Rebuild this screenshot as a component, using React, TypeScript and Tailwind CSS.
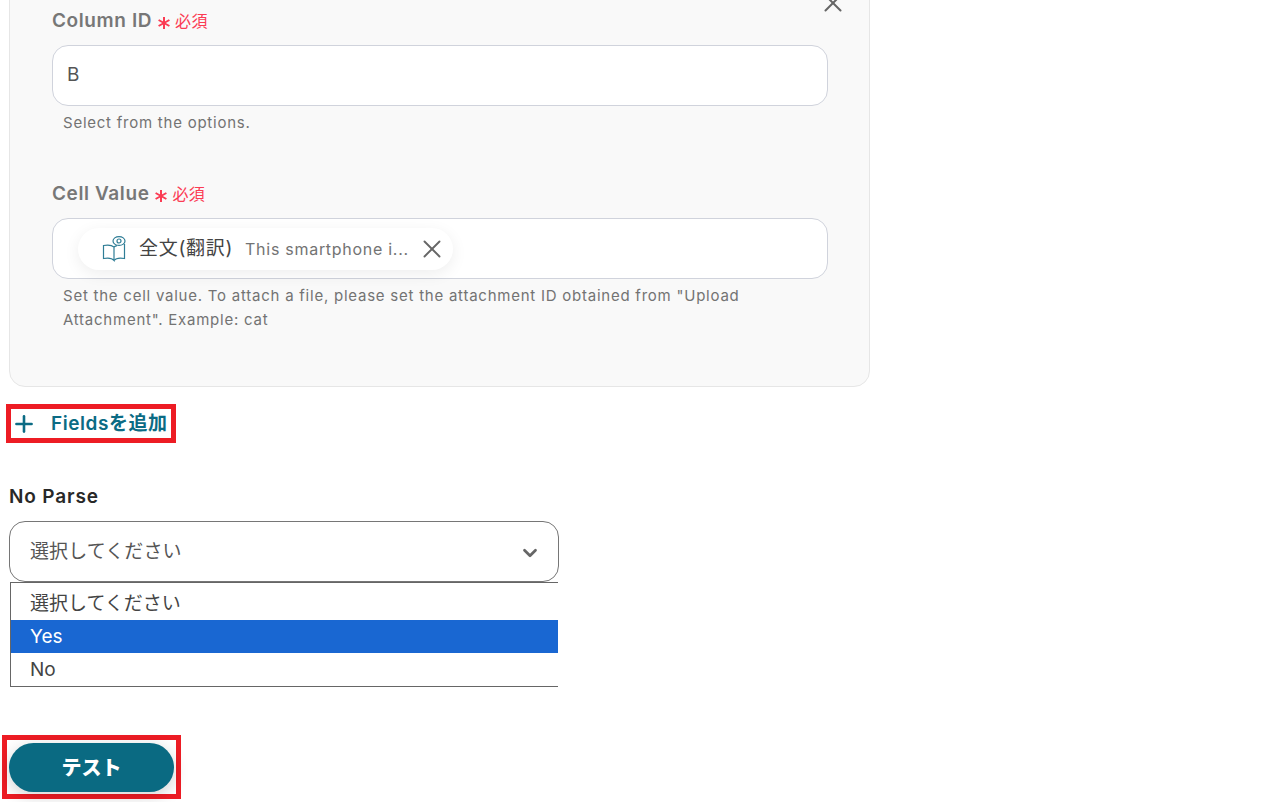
import { ChevronDown, Plus, X } from 'lucide-react'

const font = "font-['Inter','Noto_Sans_CJK_JP',sans-serif]"

function Required() {
  return (
    <span className="flex items-center text-[#fb3c54]">
      <svg width="14" height="14" viewBox="0 0 14 14" className="mt-[3px] ml-[5px]" fill="none" stroke="currentColor" strokeWidth="2">
        <path d="M7 1v12M1.6 4l10.8 6M12.4 4 1.6 10" />
      </svg>
      <span className="ml-[4px] text-[16px] leading-[22px] font-normal tracking-[0.4px]">必須</span>
    </span>
  )
}

function BookIcon() {
  return (
    <svg width="24" height="26" viewBox="0 0 24 26" fill="none" stroke="#2f7d96" strokeWidth="1.2">
      <path d="M12 11C10 9.3 6 8.6 1.5 9.5V22.5C6 21.6 10 22 12 24.5V11Z" />
      <path d="M12 11C13 10.2 14 9.8 15 9.6M22.5 8V22.5C18 21.6 14 22 12 24.5" />
      <ellipse cx="17" cy="5" rx="6" ry="4.4" />
      <circle cx="17" cy="5" r="2" />
    </svg>
  )
}

export default function App() {
  return (
    <div className={`${font} h-[802px] w-[1270px] overflow-hidden bg-white`}>
      <div className="relative mt-[-20px] ml-[9px] h-[407px] w-[861px] rounded-b-[16px] border border-[#e6e6e6] bg-[#f9f9f9] pt-[28px] pl-[42px]">
        <X className="absolute top-[7px] left-[808px] text-[#666]" size={30} strokeWidth={1.6} />

        <div className="flex h-[24px] items-center text-[19px] font-semibold tracking-[0.6px] text-[#777]">
          Column ID
          <Required />
        </div>
        <div className="mt-[12px] flex h-[61px] w-[776px] items-center rounded-[16px] border border-[#d0d3dc] bg-white px-[14px] text-[19px] text-[#555]">
          <span className="mt-[-1px]">B</span>
        </div>
        <p className="mt-[5px] ml-[11px] text-[15px] leading-[24px] tracking-[0.76px] text-[#737373]">Select from the options.</p>

        <div className="mt-[47px] flex h-[24px] items-center text-[19px] font-semibold tracking-[0.6px] text-[#777]">
          Cell Value
          <Required />
        </div>
        <div className="mt-[12px] flex h-[61px] w-[776px] items-center rounded-[16px] border border-[#d0d3dc] bg-white pl-[25px]">
          <div className="mt-[1px] flex h-[42px] w-[375px] items-center rounded-full bg-white pl-[24px] shadow-[0_4px_16px_rgba(0,0,0,0.07)]">
            <BookIcon />
            <span className="ml-[13px] text-[19px] tracking-[0.7px] text-[#444]">全文(翻訳)</span>
            <span className="ml-[12px] text-[16px] tracking-[0.72px] text-[#737373]">This smartphone i...</span>
            <X className="ml-[8px] text-[#666]" size={30} strokeWidth={1.5} />
          </div>
        </div>
        <p className="mt-[5px] ml-[11px] w-[720px] text-[15px] leading-[24px] tracking-[0.76px] text-[#737373]">
          Set the cell value. To attach a file, please set the attachment ID obtained from "Upload Attachment". Example: cat
        </p>
      </div>

      <div className="mt-[17px] ml-[6px] flex h-[39px] w-[170px] items-center border-[5px] border-[#ed1c24] pl-[3px] text-[19px] font-semibold tracking-[0.55px] text-[#0b6b84]">
        <Plus className="ml-[-3px] shrink-0" size={26} strokeWidth={2.4} />
        <span className="mt-[1px] ml-[14px] whitespace-nowrap">Fieldsを追加</span>
      </div>

      <div className="mt-[42px] ml-[9px] h-[24px] text-[19px] leading-[24px] font-semibold tracking-[0.85px] text-[#282828]">No Parse</div>

      <div className="mt-[12px] ml-[9px] flex h-[61px] w-[550px] items-center justify-between rounded-[16px] border border-[#767676] bg-white pr-[17px] pl-[20px] text-[19px] tracking-[0.1px] text-[#555]">
        <span className="mt-[1px]">選択してください</span>
        <ChevronDown className="mt-[3px] text-[#666]" size={22} strokeWidth={3} />
      </div>
      <div className="ml-[10px] h-[105px] w-[548px] border-y border-l border-[#666] pt-[4px] text-[19px] text-[#444]">
        <div className="flex h-[33px] items-center pt-[1px] pl-[19px]">選択してください</div>
        <div className="flex h-[33px] items-center bg-[#1967d2] pt-[1px] pl-[19px] text-white">Yes</div>
        <div className="flex h-[33px] items-center pt-[1px] pl-[19px]">No</div>
      </div>

      <div className="mt-[48px] ml-[2px] h-[64px] w-[179px] border-[5px] border-[#ed1c24] pt-[3px] pl-[2px]">
        <button className="flex h-[49px] w-[165px] items-center justify-center rounded-full bg-[#0a6a82] text-[20px] font-black text-white shadow-[0_4px_16px_rgba(0,0,0,0.18)]">
          テスト
        </button>
      </div>
    </div>
  )
}
